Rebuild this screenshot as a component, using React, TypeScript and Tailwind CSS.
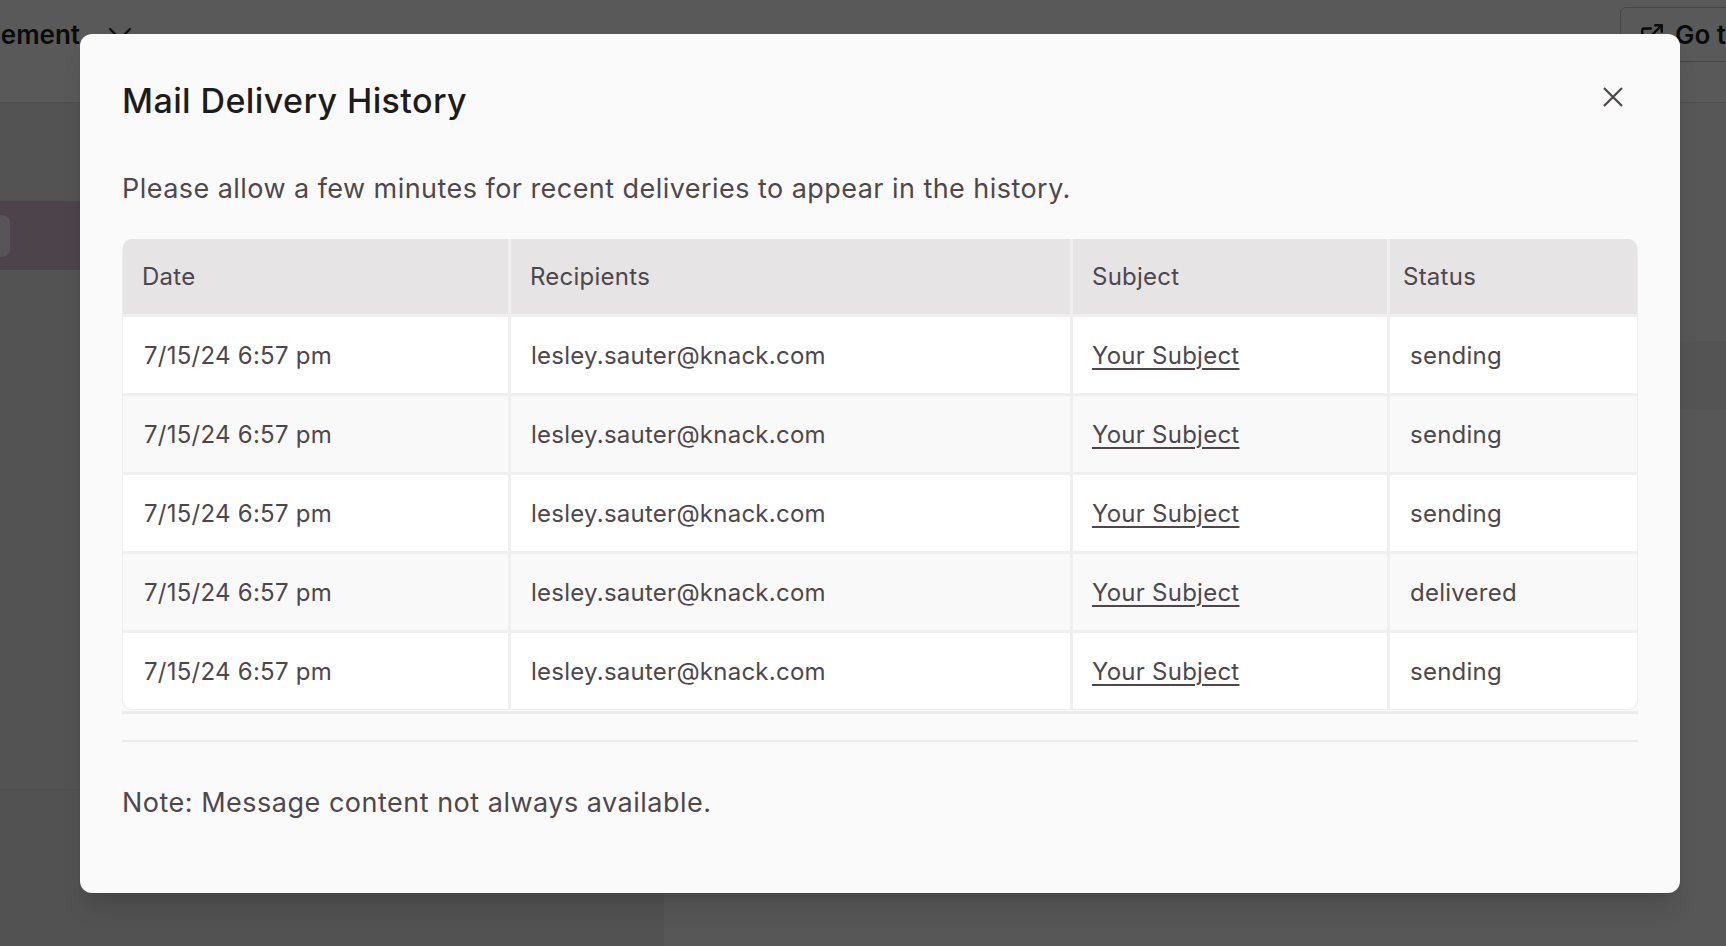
import { ChevronDown, ExternalLink } from "lucide-react";

const rows = [
  { date: "7/15/24 6:57 pm", to: "lesley.sauter@knack.com", subject: "Your Subject", status: "sending" },
  { date: "7/15/24 6:57 pm", to: "lesley.sauter@knack.com", subject: "Your Subject", status: "sending" },
  { date: "7/15/24 6:57 pm", to: "lesley.sauter@knack.com", subject: "Your Subject", status: "sending" },
  { date: "7/15/24 6:57 pm", to: "lesley.sauter@knack.com", subject: "Your Subject", status: "delivered" },
  { date: "7/15/24 6:57 pm", to: "lesley.sauter@knack.com", subject: "Your Subject", status: "sending" },
];

function BackgroundApp() {
  return (
    <div className="flex h-full flex-col">
      {/* top bar of the builder behind the dialog */}
      <header className="flex h-[103px] shrink-0 items-start overflow-hidden border-b border-[#dddddd] bg-white">
        <div className="flex items-center gap-[20px] pt-[14px]">
          <div className="flex w-[80px] justify-end overflow-hidden">
            <span className="whitespace-nowrap text-[26px] font-semibold text-[#1f1f1f]">
              Email Management
            </span>
          </div>
          <ChevronDown size={40} strokeWidth={1.4} className="text-[#1f1f1f]" />
        </div>
        <div className="ml-auto -mr-[140px] shrink-0 pt-[7px]">
          <button className="flex h-[55px] w-[246px] items-center gap-[10px] whitespace-nowrap rounded-md border border-[#c9c9c9] bg-white pl-[18px] text-[26px] font-semibold text-[#1f1f1f]">
            <ExternalLink size={26} strokeWidth={2.2} className="shrink-0" />
            Go to Live App
          </button>
        </div>
      </header>

      <div className="flex flex-1">
        <aside className="flex w-[664px] shrink-0 flex-col bg-[#ebebeb]">
          <div className="flex h-[687px] flex-col border-b border-[#dedede] bg-[#ededed]">
            <div className="mt-[98px] flex h-[69px] items-center bg-[#dcbfd3]">
              <div className="h-[42px] w-[10px] rounded-r-[8px] bg-[#fff0f8]" />
            </div>
          </div>
        </aside>
        <main className="flex-1 bg-[#f9f9f9]">
          <div className="mt-[238px] h-[69px] bg-[#f1f1f1]" />
        </main>
      </div>
    </div>
  );
}

export default function App() {
  return (
    <div className="relative h-[946px] w-full overflow-hidden bg-white font-['Inter','Noto_Sans',sans-serif]">
      <BackgroundApp />

      {/* Overlay */}
      <div className="absolute inset-0 bg-black/65" />

      {/* Dialog */}
      <div className="absolute left-[80px] top-[34px] w-[1600px] rounded-[12px] bg-[#fafafa] px-[42px] pt-[46px] pb-[74px] shadow-xl">
        <div className="flex items-start justify-between">
          <h2 className="text-[34px] leading-[41px] font-medium tracking-[0.4px] text-[#1c1c1c]">
            Mail Delivery History
          </h2>
          <button className="mt-[7px] mr-[15px] text-[#4b454b]" aria-label="Close">
            <svg width="20" height="20" viewBox="0 0 20 20" fill="none" stroke="currentColor" strokeWidth="2.2">
              <path d="M1 1 L19 19 M19 1 L1 19" />
            </svg>
          </button>
        </div>

        <p className="mt-[52px] text-[27px] leading-[32px] tracking-[0.45px] text-[#4e484d]">
          Please allow a few minutes for recent deliveries to appear in the history.
        </p>

        {/* Table */}
        <div className="mt-[34px] border-b-[3px] border-[#ececec] pb-[1px]">
          <div className="grid grid-cols-[385px_559px_314px_1fr] gap-[3px] overflow-hidden rounded-[10px] border-x border-b border-[#ededed] bg-[#efefef] text-[24px] tracking-[0.25px] text-[#4d474c]">
            {["Date", "Recipients", "Subject", "Status"].map((h) => (
              <div
                key={h}
                className={`flex h-[75px] items-center bg-[#e6e4e5] ${h === "Status" ? "pl-[13px]" : "pl-[19px]"}`}
              >
                {h}
              </div>
            ))}
            {rows.map((r, i) => {
              const bg = i % 2 === 0 ? "bg-white" : "bg-[#f9f9f9]";
              return [
                <div key={`d${i}`} className={`flex h-[76px] items-center pt-[2px] pl-[21px] ${bg}`}>
                  {r.date}
                </div>,
                <div key={`t${i}`} className={`flex h-[76px] items-center pt-[2px] pl-[20px] ${bg}`}>
                  {r.to}
                </div>,
                <div key={`s${i}`} className={`flex h-[76px] items-center pt-[2px] pl-[19px] ${bg}`}>
                  <a href="#" className="underline decoration-[1.5px] underline-offset-[4px]">
                    {r.subject}
                  </a>
                </div>,
                <div key={`st${i}`} className={`flex h-[76px] items-center pt-[2px] pl-[20px] ${bg}`}>
                  {r.status}
                </div>,
              ];
            })}
          </div>
        </div>

        <div className="mt-[26px] h-[2px] bg-[#ececec]" />

        <p className="mt-[45px] text-[27px] leading-[32px] tracking-[0.5px] text-[#4e484d]">
          Note: Message content not always available.
        </p>
      </div>
    </div>
  );
}
